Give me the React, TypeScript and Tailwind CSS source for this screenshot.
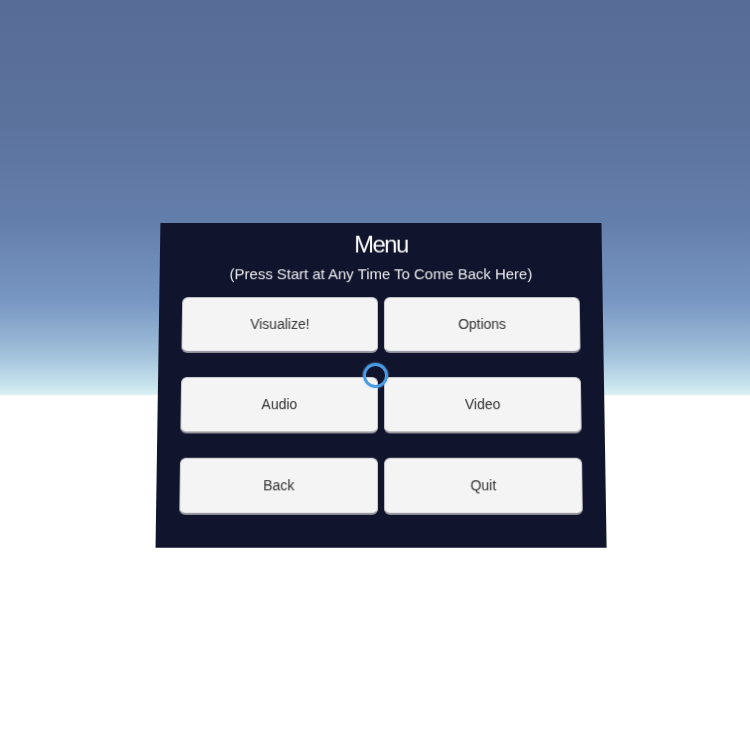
import React from 'react';

const BUTTONS = ['Visualize!', 'Options', 'Audio', 'Video', 'Back', 'Quit'];

function MenuButton({ label }: { label: string }) {
  return (
    <button className="h-[56px] rounded-[6px] bg-[#f4f4f4] border border-[#c8c8cc] border-b-2 border-b-[#9a9aa2] text-[14px] text-[#333333] [font-family:'Liberation_Sans',Arial,sans-serif]">
      {label}
    </button>
  );
}

export default function App() {
  return (
    <div className="relative w-[750px] h-[750px] overflow-hidden bg-[linear-gradient(to_bottom,#576d97_0px,#5b729d_120px,#647eab_220px,#7896c2_300px,#9cbcd8_350px,#c6e3ed_385px,#d8f0f3_394px,#ffffff_396px)]">
      <div className="flex pt-[222px] pl-[158px] [perspective:1000px]">
        <div className="w-[446px] h-[323px] bg-[#10142c] flex flex-col items-center px-[23px] [transform:rotateX(4deg)]">
          <h1 className="mt-[7px] text-[24px] leading-[30px] text-white tracking-[-1.5px] [font-family:'Liberation_Sans',Arial,sans-serif]">
            Menu
          </h1>
          <p className="mt-[6px] text-[15px] leading-[18px] text-[#ececf0] [font-family:'Liberation_Sans',Arial,sans-serif]">
            (Press Start at Any Time To Come Back Here)
          </p>
          <div className="mt-[14px] w-full grid grid-cols-2 gap-x-[6px] gap-y-[24px]">
            {BUTTONS.map(b => (
              <MenuButton key={b} label={b} />
            ))}
          </div>
        </div>
      </div>
      <div className="absolute left-[363px] top-[363px] w-[25px] h-[25px] rounded-full border-[3px] border-[#4a9be6] shadow-[0_0_2px_#8cc4f4]" />
    </div>
  );
}
